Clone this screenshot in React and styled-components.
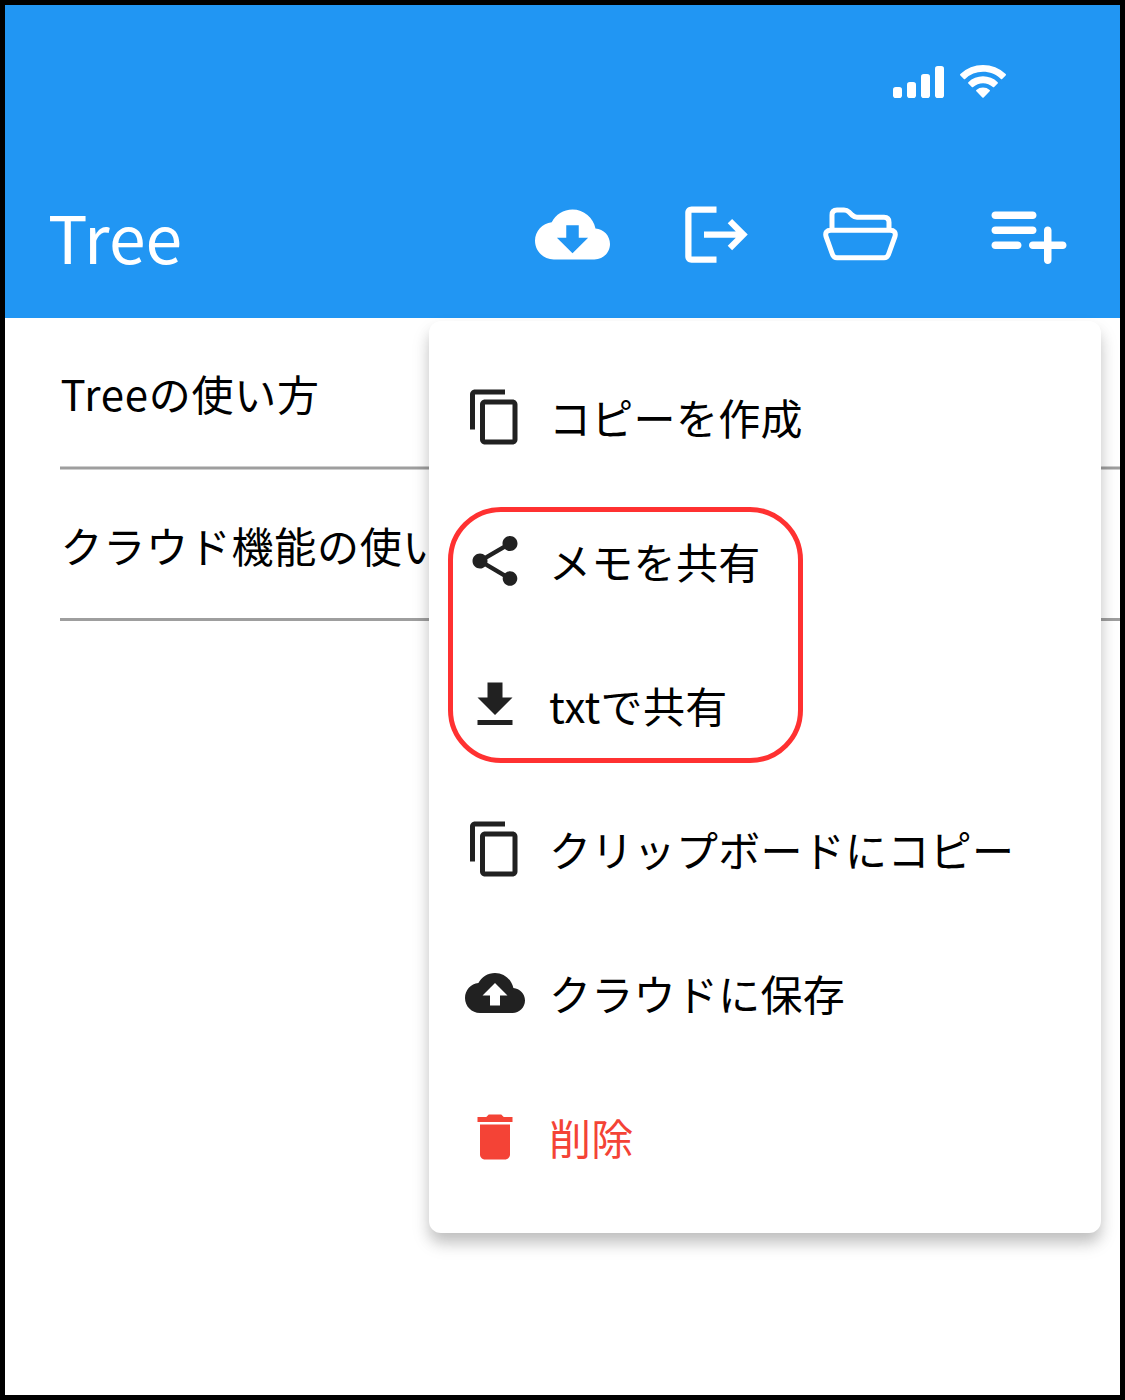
import React from "react";
import styled, { createGlobalStyle } from "styled-components";

const GlobalStyle = createGlobalStyle`
  * { box-sizing: border-box; }
  body {
    margin: 0;
    background: #fff;
    font-family: "Noto Sans CJK JP", "Noto Sans", sans-serif;
    font-weight: 400;
  }
`;

const Screen = styled.div`
  position: relative;
  width: 1125px;
  height: 1400px;
  border: 5px solid #000;
  background: #fff;
  overflow: hidden;
`;

const Header = styled.header`
  height: 313px;
  background: #2196f3;
  color: #fff;
`;

const StatusBar = styled.div`
  display: flex;
  justify-content: flex-end;
  align-items: flex-end;
  gap: 16px;
  height: 93px;
  padding-right: 114px;
`;

const AppBar = styled.div`
  display: flex;
  align-items: center;
  height: 168px;
  margin-top: 52px;
  padding: 0 46px 0 43px;
`;

const Title = styled.h1`
  flex: 1;
  margin: 0;
  padding-top: 2px;
  font-size: 66px;
  line-height: 84px;
  font-weight: 400;
`;

const Actions = styled.div`
  display: flex;
  align-items: center;
  gap: 69px;
`;

const Action = styled.button`
  display: flex;
  padding: 0;
  border: 0;
  background: none;
  color: inherit;
  margin-left: ${(p) => p.$offset || 0}px;
`;

const Glyph = styled.svg`
  display: block;
  flex: none;
  width: ${(p) => p.$w}px;
  height: ${(p) => p.$h || p.$w}px;
  fill: currentColor;
`;

const List = styled.ul`
  margin: 0;
  padding: 0 0 0 55px;
  list-style: none;
`;

const ListItem = styled.li`
  display: flex;
  align-items: center;
  height: ${(p) => p.$height}px;
  padding: 1px 0 0 0.5px;
  font-size: 42px;
  letter-spacing: 0.75px;
  line-height: 60px;
  white-space: nowrap;
  color: #000;
`;

const Divider = styled.li`
  height: ${(p) => (p.$soft ? 4 : 3)}px;
  background: ${(p) =>
    p.$soft
      ? "linear-gradient(#cecece 1px, #9e9e9e 1px, #9e9e9e 3px, #cecece 3px)"
      : "#9e9e9e"};
`;

const Menu = styled.div`
  position: absolute;
  left: 424px;
  top: 316px;
  width: 672px;
  padding: 24px 0;
  border-radius: 12px;
  background: #fff;
  box-shadow:
    0 10px 14px -1px rgba(0, 0, 0, 0.17),
    0 10px 20px 0 rgba(0, 0, 0, 0.11);
`;

const MenuItem = styled.div`
  display: flex;
  align-items: center;
  gap: 24px;
  height: 144px;
  padding-left: 36px;
  color: ${(p) => (p.$danger ? "#f44336" : "#212121")};
`;

const Label = styled.span`
  color: ${(p) => (p.$danger ? "#f44336" : "#000")};
  font-size: 42px;
  letter-spacing: 0.3px;
  line-height: 60px;
  white-space: nowrap;
`;

const Highlight = styled.div`
  position: absolute;
  left: 443px;
  top: 502px;
  width: 355px;
  height: 256px;
  border: 5px solid #ff3131;
  border-radius: 53px;
`;

const paths = {
  copy: "M16 1H4c-1.1 0-2 .9-2 2v14h2V3h12V1zm3 4H8c-1.1 0-2 .9-2 2v14c0 1.1.9 2 2 2h11c1.1 0 2-.9 2-2V7c0-1.1-.9-2-2-2zm0 16H8V7h11v14z",
  share:
    "M18 16.08c-.76 0-1.44.3-1.96.77L8.91 12.7c.05-.23.09-.46.09-.7s-.04-.47-.09-.7l7.05-4.11c.54.5 1.25.81 2.04.81 1.66 0 3-1.34 3-3s-1.34-3-3-3-3 1.34-3 3c0 .24.04.47.09.7L8.04 9.81C7.5 9.31 6.79 9 6 9c-1.66 0-3 1.34-3 3s1.34 3 3 3c.79 0 1.5-.31 2.04-.81l7.12 4.16c-.05.21-.08.43-.08.65 0 1.61 1.31 2.92 2.92 2.92s2.92-1.31 2.92-2.92-1.31-2.92-2.92-2.92z",
  download: "M19 9h-4V3H9v6H5l7 7 7-7zM5 18v2h14v-2H5z",
  cloudUp:
    "M19.35 10.04C18.67 6.59 15.64 4 12 4 9.11 4 6.6 5.64 5.35 8.04 2.34 8.36 0 10.91 0 14c0 3.31 2.69 6 6 6h13c2.76 0 5-2.24 5-5 0-2.64-2.05-4.78-4.65-4.96zM14 13v4h-4v-4H7l5-5 5 5h-3z",
  cloudDown:
    "M19.35 10.04C18.67 6.59 15.64 4 12 4 9.11 4 6.6 5.64 5.35 8.04 2.34 8.36 0 10.91 0 14c0 3.31 2.69 6 6 6h13c2.76 0 5-2.24 5-5 0-2.64-2.05-4.78-4.65-4.96zM17 13l-5 5-5-5h3V9h4v4h3z",
  logout:
    "M17 7l-1.41 1.41L18.17 11H8v2h10.17l-2.58 2.58L17 17l5-5zM4 5h8V3H4c-1.1 0-2 .9-2 2v14c0 1.1.9 2 2 2h8v-2H4V5z",
  playlistAdd:
    "M13 10H3c-.55 0-1 .45-1 1s.45 1 1 1h10c.55 0 1-.45 1-1s-.45-1-1-1zm0-4H3c-.55 0-1 .45-1 1s.45 1 1 1h10c.55 0 1-.45 1-1s-.45-1-1-1zm5 8v-3c0-.55-.45-1-1-1s-1 .45-1 1v3h-3c-.55 0-1 .45-1 1s.45 1 1 1h3v3c0 .55.45 1 1 1s1-.45 1-1v-3h3c.55 0 1-.45 1-1s-.45-1-1-1h-3zM3 16h6c.55 0 1-.45 1-1s-.45-1-1-1H3c-.55 0-1 .45-1 1s.45 1 1 1z",
  trash:
    "M6 19c0 1.1.9 2 2 2h8c1.1 0 2-.9 2-2V7H6v12zM19 4h-3.5l-1-1h-5l-1 1H5v2h14V4z",
};

const Icon = ({ name, size }) => (
  <Glyph $w={size} viewBox="0 0 24 24">
    <path d={paths[name]} />
  </Glyph>
);

const Signal = () => (
  <Glyph $w={51} $h={32} viewBox="0 0 51 32">
    <rect x="0" y="21" width="9" height="11" rx="2.8" />
    <rect x="14" y="16" width="9" height="16" rx="2.8" />
    <rect x="28" y="8" width="9" height="24" rx="2.8" />
    <rect x="42" y="0" width="9" height="32" rx="2.8" />
  </Glyph>
);

const Wifi = () => (
  <Glyph $w={46} $h={33} viewBox="0 0 15.27 11">
    <path d="M7.64 2.28c2.22 0 4.35.85 5.96 2.38.12.12.31.12.43 0l1.16-1.17a.32.32 0 000-.45 10.9 10.9 0 00-15.1 0 .32.32 0 000 .45l1.16 1.17c.12.12.31.12.43 0a8.65 8.65 0 015.96-2.38z" />
    <path d="M7.64 6.08c1.21 0 2.39.46 3.28 1.27.12.12.32.12.44 0l1.16-1.17a.32.32 0 000-.46 7.08 7.08 0 00-9.77 0 .32.32 0 000 .46l1.16 1.17c.12.12.32.12.44 0a4.9 4.9 0 013.29-1.27z" />
    <path d="M9.86 8.78a.32.32 0 00-.01-.46 3.4 3.4 0 00-4.43 0 .32.32 0 000 .46l2 2.03c.13.12.32.12.44 0l2-2.03z" />
  </Glyph>
);

const Folder = () => (
  <Glyph $w={75} viewBox="0 0 75 75">
    <g
      fill="none"
      stroke="currentColor"
      strokeWidth="5"
      strokeLinejoin="round"
    >
      <path d="M9 33V18Q9 13 14 13H21Q24 13 26 15L29 18Q31.500 20.200 34 20.200H61Q66 20.200 66 25.200V33" />
      <path d="M8 33.300H67Q73.500 33.300 72 39.300L65.500 57.500Q64.300 60.800 61 60.800H14Q10.700 60.800 9.500 57.500L3 39.300Q1.500 33.300 8 33.300Z" />
    </g>
  </Glyph>
);

const menuItems = [
  { icon: "copy", label: "コピーを作成" },
  { icon: "share", label: "メモを共有" },
  { icon: "download", label: "txtで共有" },
  { icon: "copy", label: "クリップボードにコピー" },
  { icon: "cloudUp", label: "クラウドに保存" },
  { icon: "trash", label: "削除", danger: true },
];

export default function App() {
  return (
    <>
      <GlobalStyle />
      <Screen>
        <Header>
          <StatusBar>
            <Signal />
            <Wifi />
          </StatusBar>
          <AppBar>
            <Title>Tree</Title>
            <Actions>
              <Action aria-label="download">
                <Icon name="cloudDown" size={75} />
              </Action>
              <Action aria-label="export">
                <Icon name="logout" size={75} />
              </Action>
              <Action aria-label="folder">
                <Folder />
              </Action>
              <Action aria-label="add" $offset={17}>
                <Icon name="playlistAdd" size={90} />
              </Action>
            </Actions>
          </AppBar>
        </Header>
        <List>
          <ListItem $height={148}>Treeの使い方</ListItem>
          <Divider $soft />
          <ListItem $height={148}>クラウド機能の使い方</ListItem>
          <Divider />
        </List>
        <Menu>
          {menuItems.map((item) => (
            <MenuItem key={item.label} $danger={item.danger}>
              <Icon name={item.icon} size={60} />
              <Label $danger={item.danger}>{item.label}</Label>
            </MenuItem>
          ))}
        </Menu>
        <Highlight />
      </Screen>
    </>
  );
}
